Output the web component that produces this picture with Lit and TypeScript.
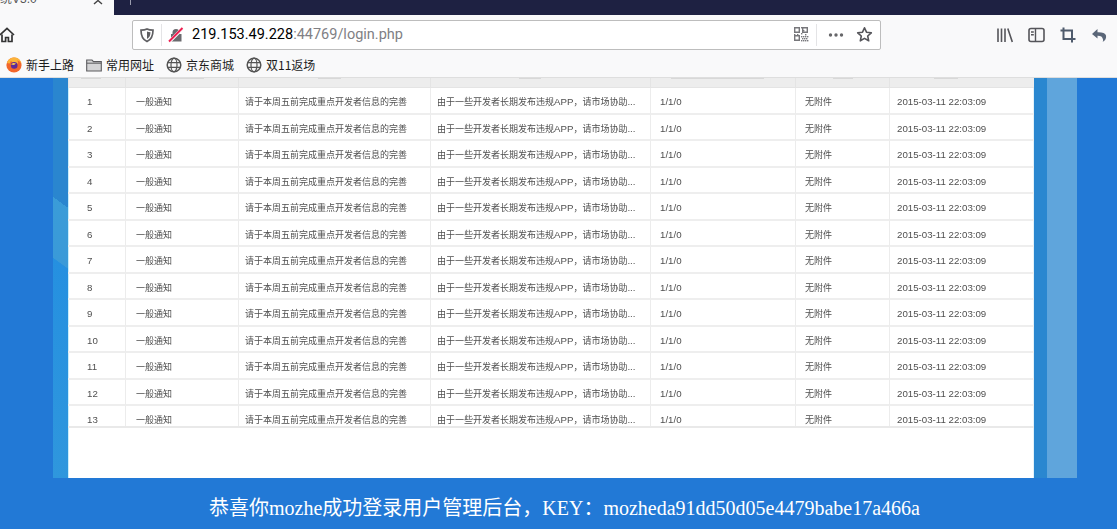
import { LitElement, html, css, svg } from 'lit';
import { customElement } from 'lit/decorators.js';

const globe = svg`<circle cx="8" cy="8" r="6.8" fill="none" stroke="#555" stroke-width="1.5"/>
  <ellipse cx="8" cy="8" rx="3" ry="6.8" fill="none" stroke="#555" stroke-width="1.2"/>
  <path d="M1.5 5.6h13M1.5 10.4h13" stroke="#555" stroke-width="1.2"/>`;

const qrCells: number[][] = [
  [7, 0], [9, 3], [7, 6], [11, 7], [0, 7], [3, 7], [7, 9], [9, 9], [11, 9], [13, 9],
  [8, 11], [10, 11], [12, 11], [7, 13], [9, 13], [11, 13], [13, 13],
];

const rows = Array.from({ length: 13 }, (_, i) => i + 1);

// tips of the header labels that are still visible under the browser chrome
const headerTicks = [
  { left: 12, width: 20 },
  { left: 33, width: 45 },
  { left: 79, width: 23 },
  { left: 88, width: 22 },
  { left: 20, width: 93 },
  { left: 37, width: 20 },
  { left: 44, width: 24 },
];

@customElement('app-root')
export class AppRoot extends LitElement {
  static styles = css`
    :host {
      display: block;
      width: 1117px;
      height: 529px;
      overflow: hidden;
      background: #2279d6;
      font-family: "Noto Sans CJK SC", "Liberation Sans", sans-serif;
    }
    svg {
      display: block;
      flex: none;
    }
    .tabs {
      display: flex;
      height: 15px;
      background: #1e2142;
    }
    .tab {
      display: flex;
      justify-content: space-between;
      width: 114px;
      height: 15px;
      overflow: hidden;
      background: #f9f9fa;
      box-sizing: border-box;
      padding-right: 10px;
    }
    .tab-title {
      margin-top: -9px;
      font-size: 12px;
      line-height: 16px;
      color: #555;
      font-family: "Liberation Sans", "Noto Sans CJK SC", sans-serif;
      white-space: nowrap;
    }
    .tab-mark {
      width: 1px;
      height: 5px;
      margin-left: 16px;
      background: #9a9cae;
    }
    .toolbar {
      display: flex;
      align-items: center;
      box-sizing: border-box;
      height: 37px;
      padding-top: 2px;
      background: #f9f9fa;
    }
    .home {
      margin-left: -1px;
      margin-right: 117px;
    }
    .urlbar {
      display: flex;
      align-items: center;
      box-sizing: border-box;
      width: 749px;
      height: 30px;
      background: #fff;
      border: 1px solid #bdbdbd;
      border-radius: 2px;
      padding-left: 6px;
    }
    .sep {
      width: 1px;
      height: 22px;
      background: #e4e4e6;
      flex: none;
    }
    .sep-a {
      margin-left: 6px;
    }
    .sep-b {
      margin: 0 11px 0 7px;
    }
    .lock {
      margin-left: 6px;
    }
    .star {
      margin: 0 7px 0 12px;
    }
    .url {
      flex: 1;
      margin-left: 8px;
      font-family: Roboto, sans-serif;
      font-size: 14.5px;
      color: #000;
      white-space: nowrap;
    }
    .url span {
      color: #808084;
    }
    .tools {
      display: flex;
      align-items: center;
      gap: 15px;
      margin-left: 116px;
    }
    .bookmarks {
      display: flex;
      align-items: center;
      gap: 12px;
      height: 25px;
      padding-left: 6px;
      background: #f9f9fa;
      border-bottom: 1px solid #dedede;
    }
    .bm {
      display: flex;
      align-items: center;
      gap: 4px;
      font-size: 12px;
      color: #1c1c1c;
      white-space: nowrap;
    }
    .page {
      display: flex;
      flex-direction: column;
      height: 451px;
    }
    .panel {
      display: flex;
      height: 400px;
      margin-left: 53px;
      width: 1024px;
    }
    .stripe-left {
      width: 15px;
      background: linear-gradient(216deg, #2a86cf 105px, #3a9cd8 105px, #3a9ad8 154px, #2590e0 154.5px, #2f97dd);
    }
    .sheet {
      width: 966px;
      background: #fff;
      box-shadow: inset 1px 0 0 #c9eefa, inset -1px 0 0 #e2f2fa;
    }
    .stripe-mid {
      width: 13px;
      background: #2a87d0;
    }
    .stripe-right {
      width: 30px;
      background: #5fa5dc;
    }
    .table {
      display: grid;
      grid-template-columns: 57px 113px 192px 220px 145px 94px 145px;
      grid-template-rows: 9px 1px repeat(13, 26.5px);
      height: 348px;
      overflow: hidden;
      border-bottom: 2px solid #e9e9e9;
      font-size: 9px;
      color: #4f4f4f;
      filter: blur(0.35px);
    }
    .head {
      background: #ededed;
      border-left: 1px solid #e4e4e4;
      box-sizing: border-box;
    }
    .tick {
      height: 1px;
      background: #d8d8d8;
    }
    .head-line {
      grid-column: 1 / -1;
      background: #e4e4e4;
    }
    .cell {
      display: flex;
      align-items: center;
      box-sizing: border-box;
      padding-top: 3px;
      border-left: 1px solid #ececec;
      border-bottom: 2px solid #eeeeee;
      white-space: nowrap;
      overflow: hidden;
    }
    .num {
      padding-left: 19px;
      font-size: 9.7px;
      font-family: "Liberation Sans", sans-serif;
      border-left: 0;
    }
    .kind {
      padding-left: 10px;
    }
    .title,
    .desc {
      padding-left: 6px;
    }
    .count {
      padding-left: 9px;
      font-size: 9.7px;
      font-family: "Liberation Sans", sans-serif;
    }
    .file {
      padding-left: 9px;
    }
    .date {
      padding-left: 7px;
      font-size: 9.7px;
      font-family: "Liberation Sans", sans-serif;
    }
    .desc b {
      font-weight: normal;
      font-family: "Liberation Sans", sans-serif;
      font-size: 9.7px;
    }
    .footer {
      flex: 1;
      display: flex;
      align-items: center;
      justify-content: center;
      padding-left: 12px;
      padding-top: 5px;
      color: #fff;
      font-size: 20px;
      font-family: "Liberation Serif", "Noto Sans CJK SC", serif;
      white-space: nowrap;
    }
  `;

  renderRow(n: number) {
    return html`
      <div class="cell num">${n}</div>
      <div class="cell kind">一般通知</div>
      <div class="cell title">请于本周五前完成重点开发者信息的完善</div>
      <div class="cell desc">由于一些开发者长期发布违规<b>APP</b>，请市场协助<b>...</b></div>
      <div class="cell count">1/1/0</div>
      <div class="cell file">无附件</div>
      <div class="cell date">2015-03-11 22:03:09</div>
    `;
  }

  render() {
    return html`
      <div class="tabs">
        <div class="tab">
          <div class="tab-title">统V3.0</div>
          <svg width="12" height="15" viewBox="0 0 12 15">
            <path d="M2 -3 L10 4 M10 -3 L2 4" stroke="#444" stroke-width="1.4" fill="none"/>
          </svg>
        </div>
        <div class="tab-mark"></div>
      </div>

      <div class="toolbar">
        <svg class="home" width="16" height="16" viewBox="0 0 16 16">
          <path d="M1 8 L8 1.5 L15 8" fill="none" stroke="#333" stroke-width="1.7"/>
          <path d="M3 7.5 V14.5 H6.6 V10.5 H9.4 V14.5 H13 V7.5" fill="none" stroke="#333" stroke-width="1.7"/>
        </svg>
        <div class="urlbar">
          <svg width="16" height="16" viewBox="0 0 16 16">
            <path d="M8 2 C10 3 12 3.2 14 3.2 C14 9 12.5 12.5 8 14.5 C3.5 12.5 2 9 2 3.2 C4 3.2 6 3 8 2 Z" fill="none" stroke="#5f5f62" stroke-width="1.7"/>
            <path d="M8 4.5 C9.2 5 10.2 5.2 11.5 5.3 C11.4 8.6 10.4 10.8 8 12 Z" fill="#5f5f62"/>
          </svg>
          <div class="sep sep-a"></div>
          <svg class="lock" width="16" height="16" viewBox="0 0 16 16">
            <path d="M3 7 H4.5 V5.5 A3.5 3.5 0 0 1 11.5 5.5 V7 H13.5 V14.5 H3 Z" fill="#6a6a6e"/>
            <path d="M1.5 14.5 L14.5 1.5" stroke="#f9f9fa" stroke-width="3.2"/>
            <path d="M1 14.5 L14.5 1" stroke="#ee1f50" stroke-width="1.9"/>
          </svg>
          <div class="url">219.153.49.228<span>:44769/login.php</span></div>
          <svg width="15" height="15" viewBox="0 0 15 15" fill="#77777b">
            <path fill-rule="evenodd" d="M0 0h6v6H0z M1.4 1.4v3.2h3.2V1.4z M8 0h6v6H8z M9.4 1.4v3.2h3.2V1.4z M0 8h6v6H0z M1.4 9.4v3.2h3.2V9.4z"/>
            ${qrCells.map(([x, y]) => svg`<rect x=${x} y=${y} width="1.4" height="1.4"/>`)}
          </svg>
          <div class="sep sep-b"></div>
          <svg width="16" height="16" viewBox="0 0 16 16" fill="#666669">
            <circle cx="2.5" cy="8" r="1.7"/><circle cx="8" cy="8" r="1.7"/><circle cx="13.5" cy="8" r="1.7"/>
          </svg>
          <svg class="star" width="17" height="17" viewBox="0 0 17 17">
            <path d="M8.5 1.8 L10.5 6.2 L15.3 6.8 L11.7 10 L12.7 14.8 L8.5 12.4 L4.3 14.8 L5.3 10 L1.7 6.8 L6.5 6.2 Z" fill="none" stroke="#55555a" stroke-width="1.6" stroke-linejoin="round"/>
          </svg>
        </div>
        <div class="tools">
          <svg width="16" height="16" viewBox="0 0 16 16" fill="none" stroke="#55555a" stroke-width="1.6">
            <path d="M1 1.5V15M4.5 1.5V15M8 1.5V15M10.8 1.5L15.3 15"/>
          </svg>
          <svg width="17" height="16" viewBox="0 0 17 16" fill="none" stroke="#55555a" stroke-width="1.6">
            <rect x="1" y="1.5" width="15" height="13" rx="2"/>
            <path d="M7.5 1.5V14.5M3 5H5.8M3 7.8H5.8" stroke-width="1.4"/>
          </svg>
          <svg width="16" height="16" viewBox="0 0 16 16" fill="none" stroke="#4f5b6c" stroke-width="2">
            <path d="M0.5 3.5H12V15.5M3.5 0.5V12H15.5"/>
          </svg>
          <svg width="16" height="16" viewBox="0 0 16 16">
            <path d="M6.5 2 L1 7 L6.5 11.5 V8.7 C9.5 8.6 11.5 9.5 12 12.5 C12.3 13.5 12 14.5 11.5 15 C14.5 13.5 15.5 11 15 8.5 C14.3 6 11 5 6.5 5.2 Z" fill="#5a6678"/>
          </svg>
        </div>
      </div>

      <div class="bookmarks">
        <div class="bm">
          <svg width="16" height="16" viewBox="0 0 16 16">
            <circle cx="8" cy="8" r="7.6" fill="#f2662b"/>
            <path d="M1 6 C2 2 6 .3 9 .6 C13 1 15.6 4.5 15.6 8 C15.6 5.8 13.5 3.6 11 3.4 C12.5 4.6 12.2 6 11.5 7 C9 5 6 6 5 4 C4 5 4.5 6 3.5 6.5 Z" fill="#fbb33a"/>
            <circle cx="8.2" cy="8.4" r="3.3" fill="#5b2a9b"/>
            <path d="M5 7.5 C6 6 8 5.5 10 6.5 L8 8 Z" fill="#f8c64a"/>
          </svg>
          新手上路
        </div>
        <div class="bm">
          <svg width="16" height="16" viewBox="0 0 16 16">
            <path d="M.7 3 H6 L7.5 4.6 H15.3 V14 H.7 Z" fill="#d4d4d6" stroke="#5c5c5f" stroke-width="1.1"/>
            <path d="M.7 6.2 H15.3" stroke="#5c5c5f" stroke-width="1"/>
          </svg>
          常用网址
        </div>
        <div class="bm"><svg width="16" height="16" viewBox="0 0 16 16">${globe}</svg>京东商城</div>
        <div class="bm"><svg width="16" height="16" viewBox="0 0 16 16">${globe}</svg>双11返场</div>
      </div>

      <div class="page">
        <div class="panel">
          <div class="stripe-left"></div>
          <div class="sheet">
            <div class="table">
              ${headerTicks.map((t) => html`<div class="head"><div class="tick" style="margin-left:${t.left}px;width:${t.width}px"></div></div>`)}
              <div class="head-line"></div>
              ${rows.map((n) => this.renderRow(n))}
            </div>
          </div>
          <div class="stripe-mid"></div>
          <div class="stripe-right"></div>
        </div>
        <div class="footer">恭喜你mozhe成功登录用户管理后台，KEY：mozheda91dd50d05e4479babe17a466a</div>
      </div>
    `;
  }
}
